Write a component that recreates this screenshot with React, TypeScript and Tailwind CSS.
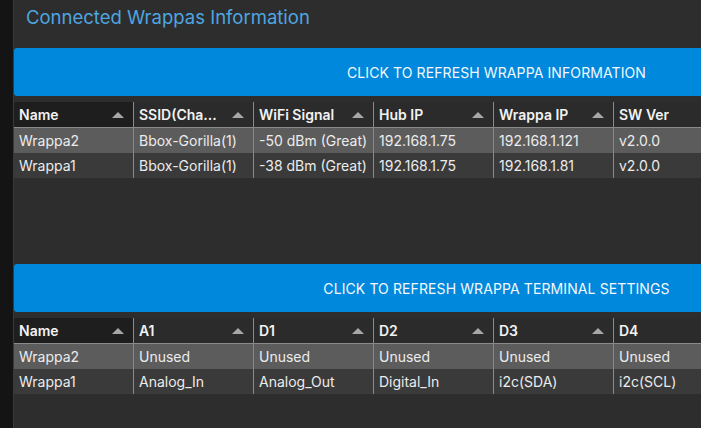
import React from "react";

const Arrow = () => (
  <svg width="12" height="8" viewBox="0 0 12 8" className="shrink-0">
    <polygon points="0,7 6,1 12,7" fill="#a8a8a8" />
  </svg>
);

type Col = { label: string; arrow?: boolean };

function Table({ cols, rows }: { cols: Col[]; rows: string[][] }) {
  return (
    <div className="h-[152px] mt-[6px]">
      <div className="flex h-[26px] border-b border-[#8a8a8a]">
        {cols.map((c, i) => (
          <div
            key={i}
            className={`w-[120px] shrink-0 flex items-center justify-between pl-[5px] pr-[9px] text-[14px] font-semibold text-[#f2f2f2] ${
              i === 0 ? "bg-[#1e1e1e]" : "bg-[#2b2b2b]"
            } ${i < cols.length - 1 ? "border-r border-[#8a8a8a]" : ""}`}
          >
            <span className="truncate">{c.label}</span>
            {c.arrow !== false && <Arrow />}
          </div>
        ))}
      </div>
      {rows.map((r, ri) => (
        <div key={ri} className={`flex h-[25px] ${ri === 0 ? "bg-[#5c5c5c]" : "bg-[#3a3a3a]"}`}>
          {r.map((v, i) => (
            <div
              key={i}
              className={`w-[120px] shrink-0 flex items-center pl-[5px] text-[14px] text-[#ececec] ${
                i < r.length - 1 ? "border-r border-[#8a8a8a]" : ""
              }`}
            >
              {v}
            </div>
          ))}
        </div>
      ))}
    </div>
  );
}

export default function App() {
  return (
    <div
      className="w-[701px] h-[428px] overflow-hidden flex bg-[#141414]"
      style={{ fontFamily: "Inter, 'Noto Sans', sans-serif" }}
    >
      <div className="w-[13px] shrink-0 bg-[#141414]" />
      <div className="w-px shrink-0 bg-[#3a3a3a]" />
      <div className="flex-1 bg-[#2d2d2d] overflow-hidden">
        <div className="w-[965px]">
          <div className="h-[48px] pl-[12px] pt-[4px] text-[18.5px] text-[#4ea6e0]">
            Connected Wrappas Information
          </div>
          <div className="h-[48px] bg-[#0088dc] rounded-l-[3px] flex items-center justify-center text-[14px] text-[#f4f8fc] tracking-[0.1px]">
            CLICK TO REFRESH WRAPPA INFORMATION
          </div>
          <Table
            cols={[
              { label: "Name" },
              { label: "SSID(Cha..." },
              { label: "WiFi Signal" },
              { label: "Hub IP" },
              { label: "Wrappa IP" },
              { label: "SW Ver" },
            ]}
            rows={[
              ["Wrappa2", "Bbox-Gorilla(1)", "-50 dBm (Great)", "192.168.1.75", "192.168.1.121", "v2.0.0"],
              ["Wrappa1", "Bbox-Gorilla(1)", "-38 dBm (Great)", "192.168.1.75", "192.168.1.81", "v2.0.0"],
            ]}
          />
          <div className="h-[48px] mt-[10px] bg-[#0088dc] rounded-l-[3px] flex items-center justify-center text-[14px] text-[#f4f8fc] tracking-[0.1px]">
            CLICK TO REFRESH WRAPPA TERMINAL SETTINGS
          </div>
          <Table
            cols={[
              { label: "Name" },
              { label: "A1" },
              { label: "D1" },
              { label: "D2" },
              { label: "D3" },
              { label: "D4" },
            ]}
            rows={[
              ["Wrappa2", "Unused", "Unused", "Unused", "Unused", "Unused"],
              ["Wrappa1", "Analog_In", "Analog_Out", "Digital_In", "i2c(SDA)", "i2c(SCL)"],
            ]}
          />
        </div>
      </div>
    </div>
  );
}
